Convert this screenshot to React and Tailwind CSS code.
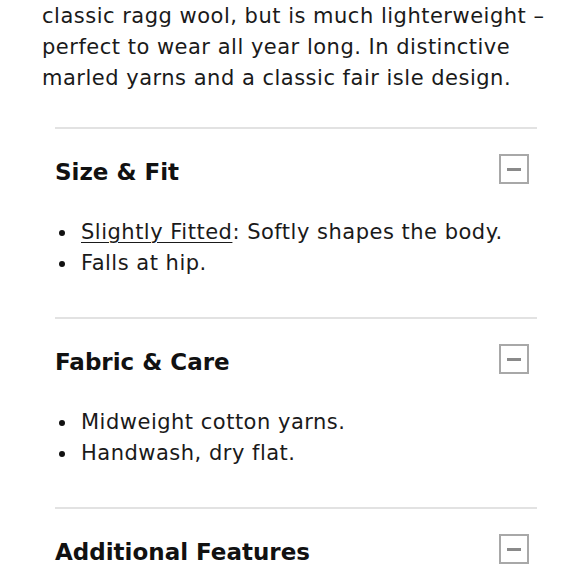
import React from "react";

const font = { fontFamily: '"DejaVu Sans", "Liberation Sans", sans-serif' };

function MinusBox() {
  return (
    <div className="w-[30px] h-[30px] border-2 border-[#a8a8a8] flex items-center justify-center mr-[8px]">
      <div className="w-[14px] h-[3px] bg-[#8a8a8a]" />
    </div>
  );
}

function Section({ title, items }) {
  return (
    <div className="border-t-2 border-[#e2e2e2]">
      <div className="flex items-center justify-between mt-[25px] h-[30px]">
        <h2 className="text-[23px] font-bold text-[#111] leading-[30px] translate-y-[3px]">{title}</h2>
        <MinusBox />
      </div>
      <ul className="mt-[33px] pb-[38px]">
        {items.map((it, i) => (
          <li key={i} className="flex items-center text-[21px] tracking-[0.5px] leading-[31px] text-[#1a1a1a] h-[31px]">
            <span className="w-[6px] h-[6px] rounded-full bg-[#111] ml-[4px] mr-[16px]" />
            <span>{it}</span>
          </li>
        ))}
      </ul>
    </div>
  );
}

export default function App() {
  return (
    <div className="w-[580px] h-[580px] overflow-hidden bg-white" style={font}>
      <p className="pl-[42px] pt-[1px] text-[21px] tracking-[0.5px] leading-[31px] text-[#1a1a1a] whitespace-nowrap">
        classic ragg wool, but is much lighterweight –<br />
        perfect to wear all year long. In distinctive<br />
        marled yarns and a classic fair isle design.
      </p>
      <div className="mx-[55px] mt-[33px] w-[482px]">
        <Section
          title="Size & Fit"
          items={[
            <>
              <span className="underline underline-offset-[3px] decoration-1">Slightly Fitted</span>: Softly shapes the body.
            </>,
            "Falls at hip.",
          ]}
        />
        <Section title="Fabric & Care" items={["Midweight cotton yarns.", "Handwash, dry flat."]} />
        <Section title="Additional Features" items={[]} />
      </div>
    </div>
  );
}
